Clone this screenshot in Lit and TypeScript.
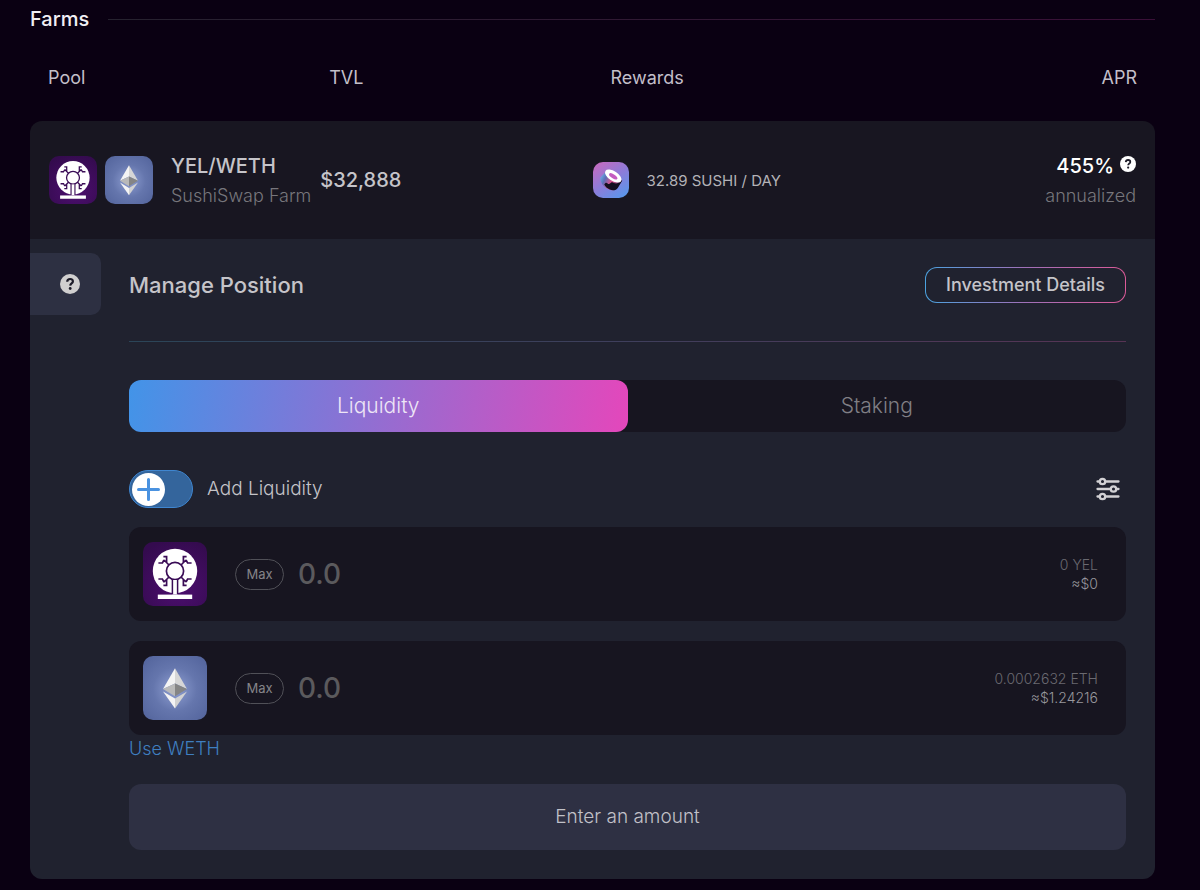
import { LitElement, html, css, svg } from "lit";
import { customElement, property, state } from "lit/decorators.js";

@customElement("token-icon")
export class TokenIcon extends LitElement {
  static styles = css`
    :host {
      display: block;
      flex: none;
      width: 48px;
      height: 48px;
      border-radius: 10px;
      overflow: hidden;
    }
    :host([size="small"]) {
      width: 36px;
      height: 36px;
    }
    :host([size="large"]) {
      width: 64px;
      height: 64px;
    }
    svg {
      display: block;
      width: 100%;
      height: 100%;
    }
  `;

  @property({ reflect: true }) token = "YEL";
  @property({ reflect: true }) size = "medium";

  private yel() {
    const arm = svg`
      <path d="M38 23l5-5M40.400 20.600v-6h3.200M43 18l1.600 3h4" />`;
    return svg`
      <defs>
        <radialGradient id="y" cx="55%" cy="70%" r="75%">
          <stop offset="0" stop-color="#4d0e70" />
          <stop offset="1" stop-color="#340b4e" />
        </radialGradient>
      </defs>
      <rect width="64" height="64" fill="url(#y)" />
      <circle cx="32" cy="29" r="22.2" fill="#fff" />
      <g fill="none" stroke="#3a0c56" stroke-width="1.7">
        <circle cx="32" cy="29" r="8.6" />
        <g>${arm}</g>
        <g transform="translate(64 0) scale(-1 1)">${arm}</g>
        <g transform="translate(0 58) scale(1 -1)">${arm}</g>
        <g transform="translate(64 58) scale(-1 -1)">${arm}</g>
      </g>
      <path d="M29.4 38v14.4h5.2V38z" fill="#fff" />
      <path d="M29.4 37.4v14.8M34.6 37.4v14.8" stroke="#3a0c56" stroke-width="1.5" />
      <rect x="14.8" y="52.6" width="34.4" height="4.4" fill="#fff" />`;
  }

  private eth() {
    return svg`
      <defs>
        <radialGradient id="e" cx="50%" cy="52%" r="68%">
          <stop offset="0" stop-color="#8f9fd2" />
          <stop offset="0.5" stop-color="#6576ad" />
          <stop offset="1" stop-color="#53649c" />
        </radialGradient>
      </defs>
      <rect width="64" height="64" fill="url(#e)" />
      <path d="M32 12.2L20 33l12-5.6z" fill="#f4f4f4" />
      <path d="M32 12.2L44 33l-12-5.6z" fill="#d6d6d6" />
      <path d="M20 33l12-5.6v12.8z" fill="#b9b9b9" />
      <path d="M44 33l-12-5.6v12.8z" fill="#858585" />
      <path d="M20 35.4l12 7.2v9.8z" fill="#f4f4f4" />
      <path d="M44 35.4l-12 7.2v9.8z" fill="#d2d2d2" />`;
  }

  private sushi() {
    return svg`
      <defs>
        <linearGradient id="s" x1="0.1" y1="0" x2="0.8" y2="1">
          <stop offset="0" stop-color="#c66bc0" />
          <stop offset="0.5" stop-color="#8f7bd8" />
          <stop offset="1" stop-color="#5b96ea" />
        </linearGradient>
        <linearGradient id="r" x1="0" y1="0.2" x2="1" y2="0.6">
          <stop offset="0" stop-color="#6fb4ea" />
          <stop offset="0.25" stop-color="#5c6fb8" />
          <stop offset="0.55" stop-color="#e0528e" />
          <stop offset="1" stop-color="#3a2b5a" />
        </linearGradient>
      </defs>
      <rect width="64" height="64" fill="url(#s)" />
      <path d="M23 17L13 28c0 9 6 19 20 22 5 0 8-1 10-4l9-13z" fill="url(#r)" />
      <path d="M20 40c2-4 4-4 6-2 3 3 5-1 7-2 3-1 5 3 9 2 4 0 6-3 10-5l-8 13c-3 5-9 5-14 3-5-2-8-5-10-9z" fill="#14101f" />
      <ellipse cx="36" cy="25" rx="16.600" ry="8.600" transform="rotate(33 36 25)" fill="#fff" />
      <ellipse cx="36" cy="25.500" rx="8.500" ry="3.600" transform="rotate(33 36 25.500)" fill="#c45cc0" />`;
  }

  render() {
    const art =
      this.token === "YEL" ? this.yel() : this.token === "ETH" ? this.eth() : this.sushi();
    return html`<svg viewBox="0 0 64 64" role="img" aria-label=${this.token}>${art}</svg>`;
  }
}

@customElement("amount-field")
export class AmountField extends LitElement {
  static styles = css`
    :host {
      display: flex;
      align-items: center;
      height: 94px;
      padding: 0 28px 0 14px;
      box-sizing: border-box;
      border-radius: 12px;
      background: #171520;
    }
    .max {
      margin-left: 28px;
      width: 49px;
      height: 31px;
      padding: 0;
      border: 1px solid #505057;
      border-radius: 16px;
      background: none;
      color: #858489;
      font: 400 13px/20px "Inter", sans-serif;
    }
    .amount {
      flex: 1;
      min-width: 0;
      height: 44px;
      margin-left: 14px;
      padding: 0;
      border: 0;
      outline: 0;
      background: none;
      color: #e4e4e6;
      font: 500 28px/44px "Inter", sans-serif;
    }
    .amount::placeholder {
      color: #5b5a5d;
      opacity: 1;
    }
    .balance {
      text-align: right;
      font: 300 14px/19px "Inter", sans-serif;
      color: #6a6970;
    }
    .fiat {
      color: #98979d;
    }
  `;

  @property() token = "";
  @property() balance = "";
  @property() fiat = "";

  render() {
    return html`
      <token-icon token=${this.token} size="large"></token-icon>
      <button class="max" type="button">Max</button>
      <input class="amount" inputmode="decimal" placeholder="0.0" aria-label="${this.token} amount" />
      <div class="balance">
        <div>${this.balance}</div>
        <div class="fiat">${this.fiat}</div>
      </div>
    `;
  }
}

@customElement("app-root")
export class AppRoot extends LitElement {
  static styles = css`
    :host {
      display: block;
      box-sizing: border-box;
      min-height: 100vh;
      padding: 0 45px 11px 30px;
      background: #0a0012;
      color: #c5c4c9;
      font-family: "Inter", sans-serif;
    }
    button {
      font-family: inherit;
      cursor: pointer;
    }
    .heading {
      display: flex;
      align-items: center;
      gap: 19px;
      height: 38px;
    }
    .heading h1 {
      margin: 0;
      font-size: 20px;
      line-height: 24px;
      font-weight: 500;
      color: #f1eff4;
    }
    .rule {
      flex: 1;
      height: 1px;
      background: linear-gradient(90deg, #26222f, #3a1038);
    }
    .farms {
      width: 100%;
      table-layout: fixed;
      border-collapse: separate;
      border-spacing: 0;
    }
    th {
      height: 83px;
      padding: 0 18px 4px;
      box-sizing: border-box;
      text-align: left;
      font-size: 18px;
      line-height: 24px;
      font-weight: 400;
      color: #c3bfc9;
    }
    th:last-child {
      text-align: right;
    }
    td {
      padding: 0;
    }
    .summary td {
      height: 118px;
      background: #181621;
      white-space: nowrap;
    }
    .summary td:first-child {
      padding-left: 19px;
      border-radius: 12px 0 0 0;
    }
    .summary td:last-child {
      padding-right: 19px;
      border-radius: 0 12px 0 0;
      text-align: right;
    }
    .pool {
      display: flex;
      align-items: center;
      gap: 8px;
    }
    .names {
      margin-left: 10px;
      padding-top: 2px;
    }
    .name {
      font-size: 20px;
      line-height: 30px;
      font-weight: 500;
      color: #c5c4c9;
    }
    .sub {
      font-size: 18px;
      line-height: 30px;
      font-weight: 300;
      color: #77767c;
    }
    .summary .tvl {
      padding-left: 9px;
      font-size: 20px;
      font-weight: 500;
    }
    .rewards {
      display: flex;
      align-items: center;
      gap: 18px;
      font-size: 15px;
      font-weight: 400;
      color: #b3b2b7;
    }
    .yield {
      padding-top: 2px;
    }
    .apr {
      display: flex;
      align-items: center;
      justify-content: flex-end;
      gap: 6px;
      font-size: 20px;
      line-height: 30px;
      font-weight: 500;
      color: #fff;
    }
    .apr svg {
      margin-bottom: 4px;
    }
    .details {
      border-radius: 0 0 12px 12px;
      background: #20222f;
    }
    .panel {
      display: flex;
      align-items: flex-start;
      gap: 28px;
      padding-right: 29px;
    }
    .help {
      display: flex;
      align-items: center;
      justify-content: center;
      width: 71px;
      height: 62px;
      margin-top: 14px;
      padding: 0 0 0 9px;
      border: 0;
      border-radius: 0 10px 10px 0;
      background: #2d3042;
      color: #d0cfcf;
    }
    .body {
      flex: 1;
      min-width: 0;
      padding: 28px 0 29px;
    }
    .title {
      display: flex;
      align-items: center;
      justify-content: space-between;
      padding-bottom: 38px;
    }
    .title h2 {
      margin: 0;
      font-size: 22px;
      line-height: 36px;
      font-weight: 500;
    }
    .outline {
      height: 36px;
      padding: 0 20px;
      border: 1px solid transparent;
      border-radius: 12px;
      background:
        linear-gradient(#20222f, #20222f) padding-box,
        linear-gradient(90deg, #4ba3e0, #a070b8 50%, #dc5a98) border-box;
      color: #c5c4c9;
      font-size: 18px;
      line-height: 24px;
      font-weight: 500;
    }
    .divider {
      height: 1px;
      background: linear-gradient(90deg, #2b4558, #3f3f5c 50%, #573354);
    }
    .tabs {
      display: grid;
      grid-template-columns: 1fr 1fr;
      margin-top: 38px;
      border-radius: 12px;
      background: #171520;
    }
    .tab {
      height: 52px;
      padding: 0;
      border: 0;
      border-radius: 12px;
      background: none;
      color: #807f85;
      font-size: 21px;
      line-height: 24px;
      font-weight: 300;
    }
    .tab[aria-selected="true"] {
      background: linear-gradient(98deg, #4294e8, #e447bb);
      color: #eee6f6;
    }
    .options {
      display: flex;
      align-items: center;
      justify-content: space-between;
      margin: 38px 0 19px;
    }
    .switch {
      display: flex;
      align-items: center;
      gap: 14px;
      font-size: 19px;
      line-height: 38px;
      font-weight: 300;
      cursor: pointer;
    }
    .track {
      position: relative;
      display: flex;
      align-items: center;
      width: 64px;
      height: 38px;
      padding: 0 2px;
      box-sizing: border-box;
      border: 1px solid #3f86d0;
      border-radius: 19px;
      background: #34659c;
    }
    .track input {
      position: absolute;
      inset: 0;
      width: 100%;
      height: 100%;
      margin: 0;
      opacity: 0;
      cursor: pointer;
    }
    .settings {
      display: flex;
      padding: 0;
      margin-right: 6px;
      border: 0;
      background: none;
      color: #d2d1d4;
    }
    .fields {
      display: grid;
      gap: 20px;
    }
    .wrap {
      display: inline-block;
      color: #3f7fc0;
      font-size: 18px;
      line-height: 28px;
      font-weight: 300;
      text-decoration: none;
      vertical-align: top;
    }
    .submit {
      display: block;
      width: 100%;
      height: 66px;
      margin-top: 21px;
      border: 0;
      border-radius: 12px;
      background: #2e3043;
      color: #c1c1c8;
      font-size: 19px;
      line-height: 24px;
      font-weight: 300;
    }
  `;

  @state() private tab = "Liquidity";

  private question(size: number) {
    return html`<svg width=${size} height=${size} viewBox="0 0 20 20" aria-hidden="true">
      <circle cx="10" cy="10" r="10" fill="currentColor" />
      <path
        d="M7.200 7.700c.1-1.700 1.300-2.700 2.900-2.700s2.800 1 2.800 2.400c0 2.100-2.600 2-2.700 4.200"
        fill="none"
        stroke="#1c1b28"
        stroke-width="2.2"
      />
      <circle cx="10.200" cy="14.500" r="1.400" fill="#1c1b28" />
    </svg>`;
  }

  private tabButton(name: string) {
    return html`<button
      class="tab"
      type="button"
      role="tab"
      aria-selected=${this.tab === name ? "true" : "false"}
      @click=${() => (this.tab = name)}
    >
      ${name}
    </button>`;
  }

  render() {
    return html`
      <div class="heading">
        <h1>Farms</h1>
        <div class="rule"></div>
      </div>
      <table class="farms">
        <thead>
          <tr>
            <th>Pool</th>
            <th>TVL</th>
            <th>Rewards</th>
            <th>APR</th>
          </tr>
        </thead>
        <tbody>
          <tr class="summary">
            <td>
              <div class="pool">
                <token-icon token="YEL"></token-icon>
                <token-icon token="ETH"></token-icon>
                <div class="names">
                  <div class="name">YEL/WETH</div>
                  <div class="sub">SushiSwap Farm</div>
                </div>
              </div>
            </td>
            <td class="tvl">$32,888</td>
            <td>
              <div class="rewards">
                <token-icon token="SUSHI" size="small"></token-icon>
                <span>32.89 SUSHI / DAY</span>
              </div>
            </td>
            <td>
              <div class="yield">
                <div class="apr">455% ${this.question(16)}</div>
                <div class="sub">annualized</div>
              </div>
            </td>
          </tr>
          <tr>
            <td class="details" colspan="4">
              <div class="panel">
                <button class="help" type="button" aria-label="Help">${this.question(20)}</button>
                <div class="body">
                  <div class="title">
                    <h2>Manage Position</h2>
                    <button class="outline" type="button">Investment Details</button>
                  </div>
                  <div class="divider"></div>
                  <div class="tabs" role="tablist">
                    ${this.tabButton("Liquidity")} ${this.tabButton("Staking")}
                  </div>
                  <div class="options">
                    <label class="switch">
                      <span class="track">
                        <input type="checkbox" role="switch" />
                        <svg width="33" height="33" viewBox="0 0 33 33" aria-hidden="true">
                          <circle cx="16.500" cy="16.500" r="16.500" fill="#fff" />
                          <path
                            d="M16.500 6.500v20M6.500 16.500h20"
                            stroke="#4a92e0"
                            stroke-width="3"
                            stroke-linecap="round"
                          />
                        </svg>
                      </span>
                      Add Liquidity
                    </label>
                    <button class="settings" type="button" aria-label="Settings">
                      <svg
                        width="24"
                        height="24"
                        viewBox="0 0 24 24"
                        fill="none"
                        stroke="currentColor"
                        stroke-width="2.3"
                        stroke-linecap="round"
                      >
                        <path d="M1.500 4.500h2.200M9.300 4.500h13.200M1.500 12h13M20.500 12h2M1.500 19.500h2.200M9.300 19.500h13.200" />
                        <circle cx="6.500" cy="4.500" r="2.700" />
                        <circle cx="17.500" cy="12" r="2.700" />
                        <circle cx="6.500" cy="19.500" r="2.700" />
                      </svg>
                    </button>
                  </div>
                  <div class="fields">
                    <amount-field token="YEL" balance="0 YEL" fiat="≈$0"></amount-field>
                    <amount-field token="ETH" balance="0.0002632 ETH" fiat="≈$1.24216"></amount-field>
                  </div>
                  <a class="wrap" href="#weth">Use WETH</a>
                  <button class="submit" type="button">Enter an amount</button>
                </div>
              </div>
            </td>
          </tr>
        </tbody>
      </table>
    `;
  }
}
